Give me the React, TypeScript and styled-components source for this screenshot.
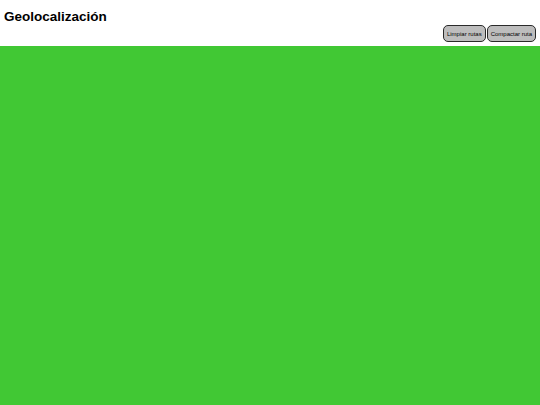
import React from "react";
import styled, { createGlobalStyle } from "styled-components";

const Global = createGlobalStyle`
  html, body { margin: 0; padding: 0; height: 100%; }
  body { font-family: "Liberation Sans", Arial, sans-serif; background: #fff; }
  #root { height: 100%; }
`;

const Page = styled.div`
  display: flex;
  flex-direction: column;
  height: 405px;
`;

const Header = styled.header`
  height: 46px;
  flex: none;
  display: flex;
  flex-direction: column;
  padding: 0 4px 4px 4px;
  box-sizing: border-box;
`;

const Title = styled.h1`
  margin: 8px 0 0 0;
  font-size: 13.5px;
  font-weight: bold;
  color: #000;
  line-height: 17px;
`;

const Actions = styled.div`
  display: flex;
  justify-content: flex-end;
  gap: 1px;
  margin-top: auto;
`;

const Button = styled.button`
  height: 17px;
  padding: 0 3px;
  font-family: "Liberation Sans", Arial, sans-serif;
  font-size: 6px;
  color: #000;
  background: #bdbdbd;
  border: 1px solid #2a2a2a;
  border-radius: 5px;
  cursor: pointer;
`;

const Map = styled.div`
  flex: 1;
  background: #41c834;
`;

export default function App() {
  return (
    <>
      <Global />
      <Page>
        <Header>
          <Title>Geolocalización</Title>
          <Actions>
            <Button>Limpiar rutas</Button>
            <Button>Compactar ruta</Button>
          </Actions>
        </Header>
        <Map />
      </Page>
    </>
  );
}
